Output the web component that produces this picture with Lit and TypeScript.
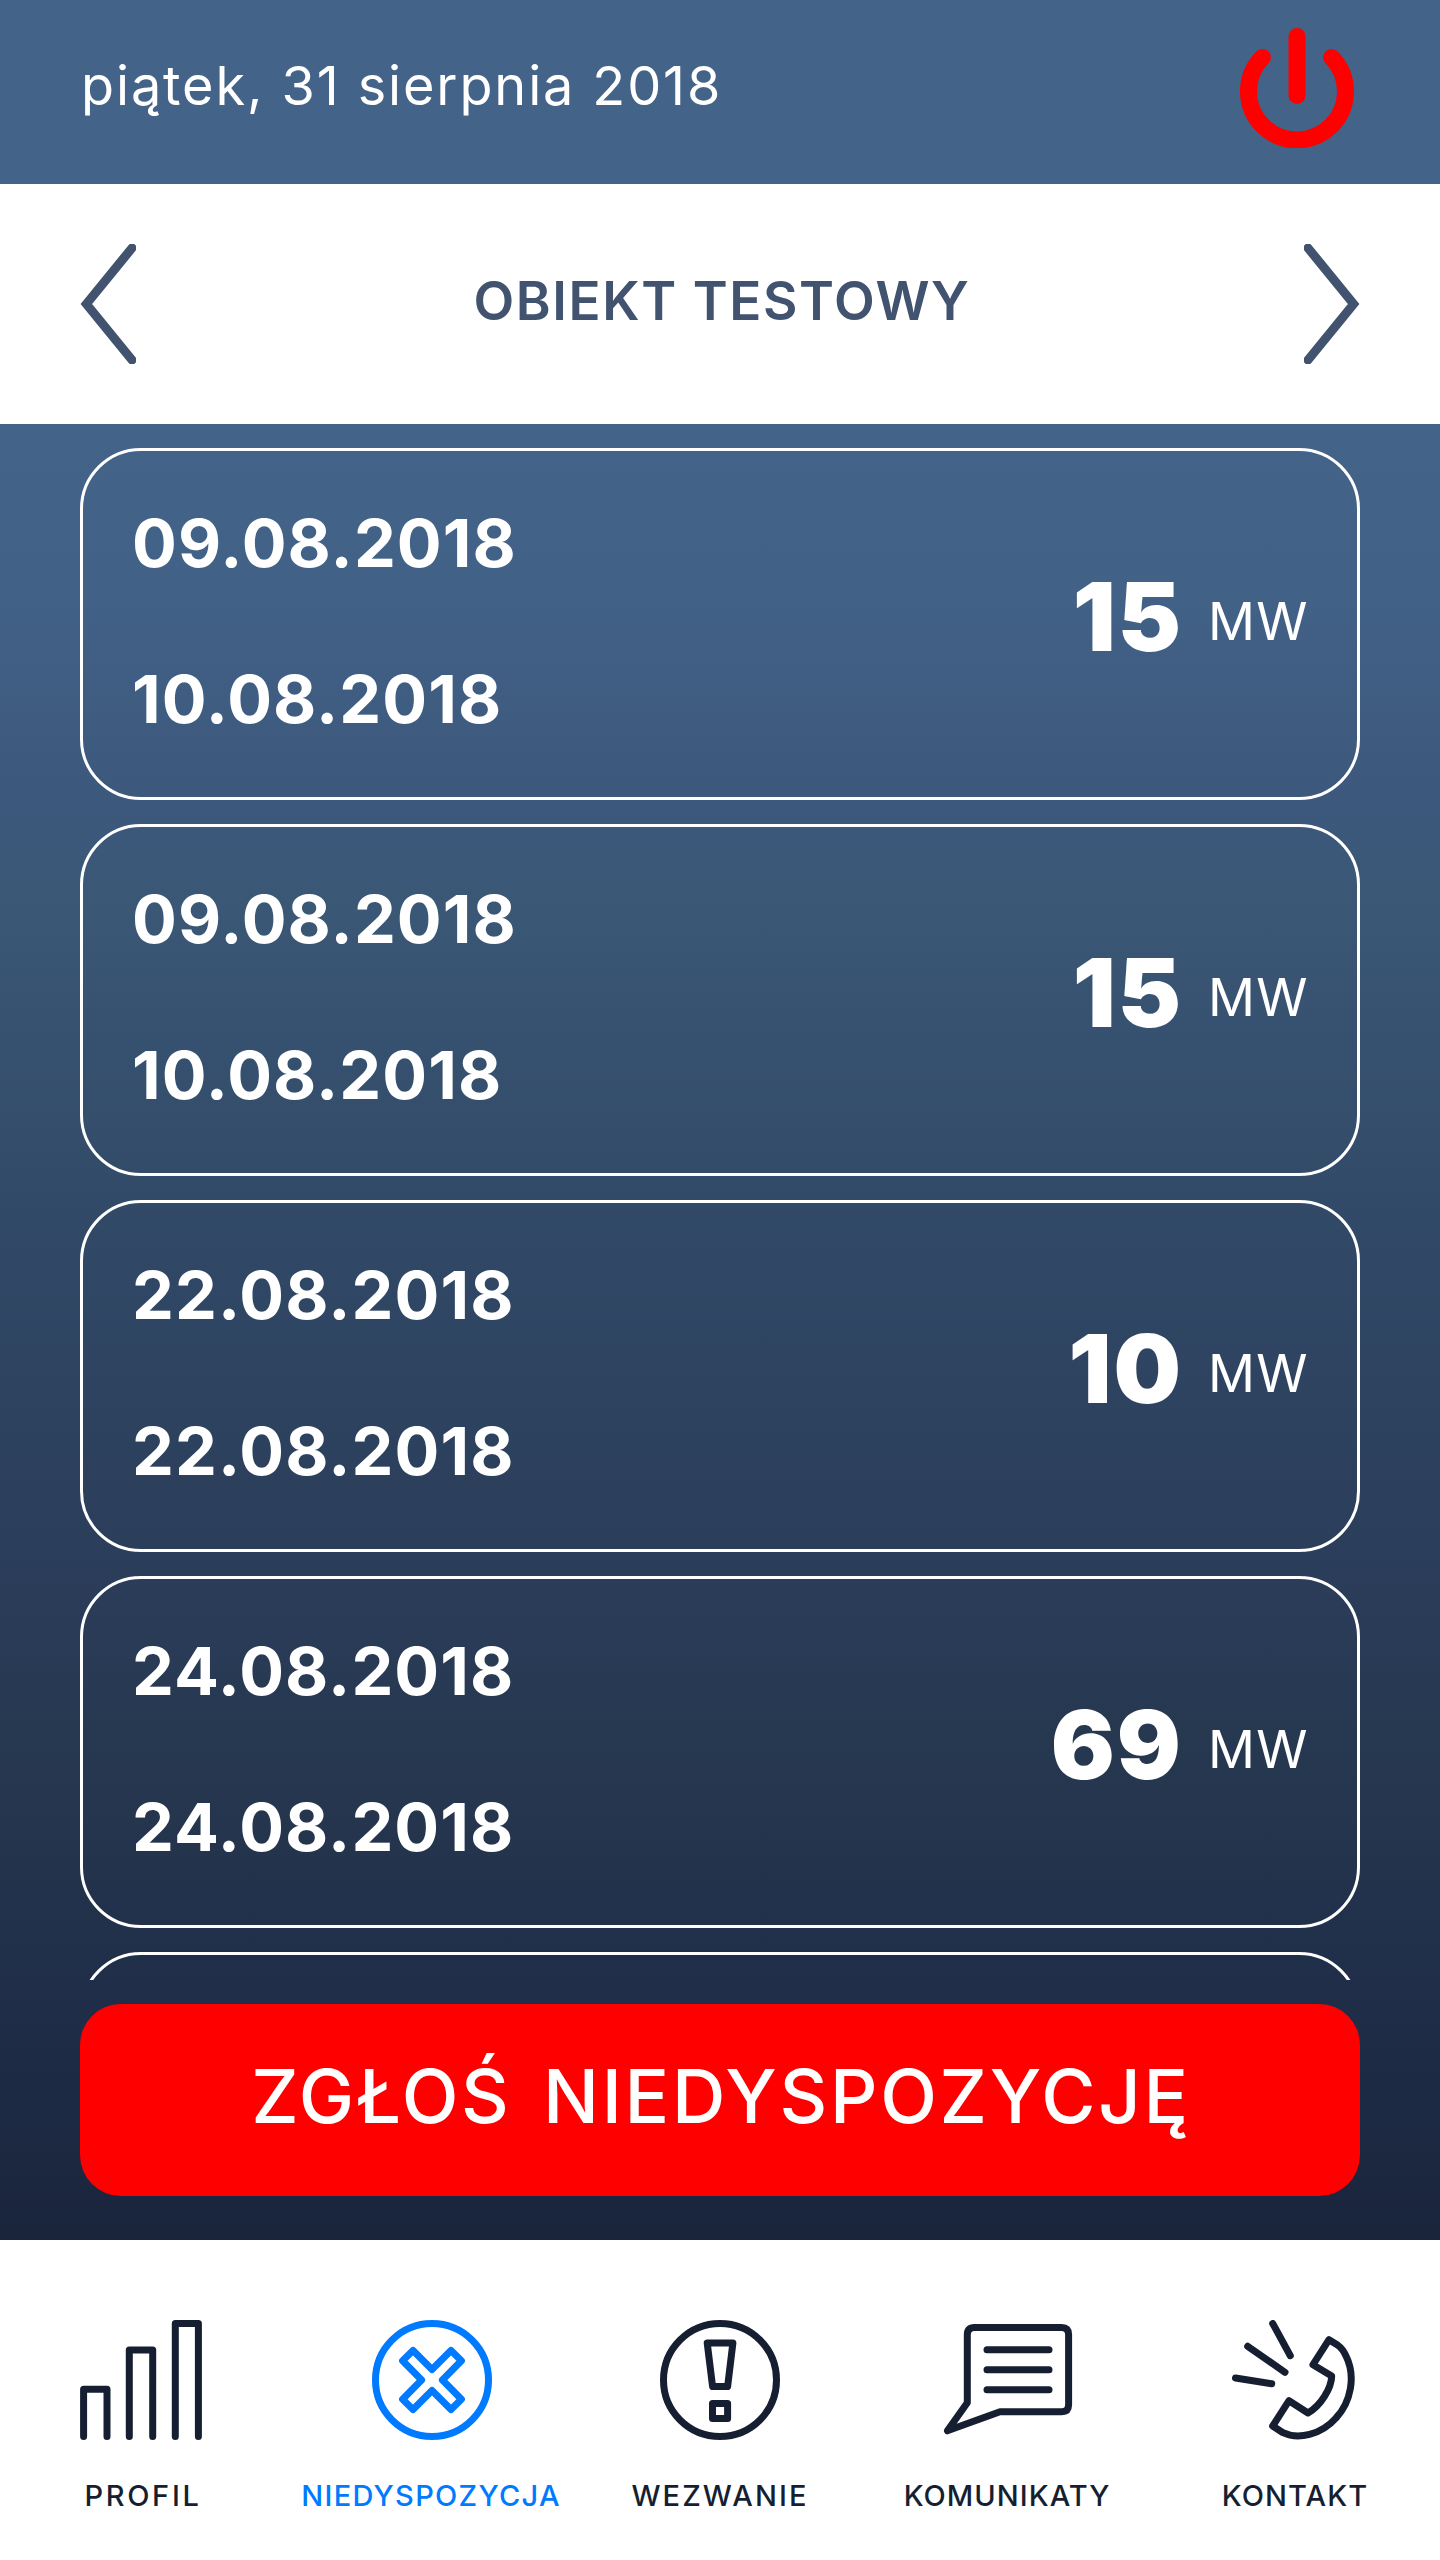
import { LitElement, html, svg, css, TemplateResult } from "lit";
import { customElement, property, state } from "lit/decorators.js";
import { classMap } from "lit/directives/class-map.js";

interface Outage {
  from: string;
  to: string;
  power: number;
}

interface Tab {
  id: string;
  label: string;
  tracking: number;
  icon: TemplateResult;
}

const OUTAGES: Outage[] = [
  { from: "09.08.2018", to: "10.08.2018", power: 15 },
  { from: "09.08.2018", to: "10.08.2018", power: 15 },
  { from: "22.08.2018", to: "22.08.2018", power: 10 },
  { from: "24.08.2018", to: "24.08.2018", power: 69 },
];

const TABS: Tab[] = [
  {
    id: "profile",
    label: "PROFIL",
    tracking: 2.68,
    icon: svg`<path d="M11.6 116.5V69.3H35V116.5M57.3 116.5V30H80.7V116.5M103.3 116.5V3.5H126.4V116.5" />`,
  },
  {
    id: "outage",
    label: "NIEDYSPOZYCJA",
    tracking: 1.31,
    icon: svg`<circle cx="72" cy="60" r="56.5" />
      <path d="M53 30.5 72 49.5 91 30.5 101.4 40.8 82.4 60 101.4 79.2 91 89.5 72 70.5 53 89.5 42.6 79.2 61.6 60 42.6 40.8Z" />`,
  },
  {
    id: "call",
    label: "WEZWANIE",
    tracking: 2.1,
    icon: svg`<circle cx="72" cy="60" r="56.5" />
      <path d="M59.2 23H84.9L79.6 66.6H64.6ZM64.5 83.4H79.6V98.4H64.5Z" />`,
  },
  {
    id: "messages",
    label: "KOMUNIKATY",
    tracking: 1.02,
    icon: svg`<path d="M31.3 82.7V14.4Q31.3 7.4 38.3 7.4H125.7Q132.6 7.4 132.6 14.4V84.7Q132.6 91.7 125.7 91.7H64L11.4 110.8Z" />
      <path d="M51 29.7H113M51 49.7H113M51 69.7H113" />`,
  },
  {
    id: "contact",
    label: "KONTAKT",
    tracking: 1.1,
    icon: svg`<path d="M48.7 3.5 66.3 35.7M23.7 26.3 61 52.3M11.5 58 47.7 63.7" />
      <path d="M105 19.7 89 44.7 107.7 55.9C107.5 68 97 85.5 84 93L65 80.7 48.7 106 59 112.7C74 120 97 115 112 98C127 82 132 56 122 36C120 31.5 117 27.5 113.5 25Z" />`,
  },
];

@customElement("outage-card")
class OutageCard extends LitElement {
  @property({ attribute: false }) item?: Outage;

  static styles = css`
    :host {
      display: flex;
      flex: none;
      box-sizing: border-box;
      height: 352px;
      padding: 0 47px 7px 49px;
      border: 3px solid #fff;
      border-radius: 61px;
      align-items: center;
      justify-content: space-between;
      color: #fff;
    }
    .date {
      font-size: 66.5px;
      font-weight: 700;
      line-height: 156px;
      letter-spacing: 1.1px;
    }
    .power {
      display: flex;
      align-items: center;
      gap: 22px;
    }
    .value {
      margin-bottom: 7px;
      font-size: 95px;
      font-weight: 900;
      line-height: 120px;
      letter-spacing: 2px;
      padding-right: 3px;
    }
    .unit {
      padding-top: 2px;
      font-size: 52px;
      font-weight: 400;
      line-height: 64px;
      letter-spacing: 1.4px;
      padding-right: 1px;
    }
  `;

  render() {
    if (!this.item) return html``;
    return html`
      <div>
        <div class="date">${this.item.from}</div>
        <div class="date">${this.item.to}</div>
      </div>
      <div class="power">
        <span class="value">${this.item.power}</span>
        <span class="unit">MW</span>
      </div>
    `;
  }
}

@customElement("app-root")
class AppRoot extends LitElement {
  @state() private active = "outage";

  static styles = css`
    :host {
      display: flex;
      flex-direction: column;
      width: 1440px;
      height: 2560px;
      overflow: hidden;
      background: #446388;
      font-family: Inter, "Liberation Sans", sans-serif;
    }
    svg {
      display: block;
      flex: none;
    }
    .header {
      display: flex;
      flex: none;
      box-sizing: border-box;
      height: 184px;
      padding: 28px 86px 36px 81px;
      align-items: center;
      justify-content: space-between;
      color: #fff;
    }
    .today {
      padding-bottom: 4px;
      font-size: 54px;
      line-height: 64px;
      letter-spacing: 1.88px;
    }
    .switcher {
      display: flex;
      flex: none;
      box-sizing: border-box;
      height: 240px;
      padding: 0 80px;
      align-items: center;
      justify-content: space-between;
      background: #fff;
      color: #41536f;
    }
    .name {
      padding: 0 0 6px 4px;
      font-size: 53px;
      font-weight: 600;
      line-height: 64px;
      letter-spacing: 1.6px;
    }
    .main {
      display: flex;
      flex: 1;
      min-height: 0;
      flex-direction: column;
      padding: 24px 80px 44px;
      background: linear-gradient(
        #446388 0,
        #426186 176px,
        #3c587c 380px,
        #3a5775 490px,
        #304866 826px,
        #2a3c58 1176px,
        #26384f 1336px,
        #202e49 1560px,
        #1a253c 1816px
      );
    }
    .list {
      display: flex;
      flex: 1;
      min-height: 0;
      flex-direction: column;
      gap: 24px;
      overflow: hidden;
    }
    .report {
      flex: none;
      height: 192px;
      margin-top: 24px;
      padding: 0 0 8px 2px;
      border: 0;
      border-radius: 41px;
      background: #f00;
      color: #fff;
      font: 500 74px / 90px Inter, "Liberation Sans", sans-serif;
      letter-spacing: 2.7px;
      word-spacing: 9px;
    }
    .tabs {
      display: grid;
      flex: none;
      box-sizing: border-box;
      height: 320px;
      padding-top: 80px;
      grid-template-columns: repeat(5, 288px);
      background: #fff;
    }
    .tab {
      display: flex;
      flex-direction: column;
      align-items: center;
      gap: 37px;
      color: #161f31;
      font-size: 29px;
      font-weight: 500;
      line-height: 37px;
    }
    .tab:not(:nth-child(3)) span {
      margin-right: 2px;
    }
    .tab.active {
      color: #007aff;
    }
  `;

  render() {
    return html`
      <header class="header">
        <span class="today">piątek, 31 sierpnia 2018</span>
        <svg width="114" height="120" fill="none" stroke="#f00" stroke-width="17" stroke-linecap="round">
          <path d="M22.4 29.4A48.5 48.5 0 1 0 91.6 29.4M57 8.5V67.5" />
        </svg>
      </header>
      <div class="switcher">
        <svg width="56" height="120" fill="none" stroke="currentColor" stroke-width="9" stroke-linecap="round">
          <path d="M52 4 6.4 60 52 116" />
        </svg>
        <span class="name">OBIEKT TESTOWY</span>
        <svg width="56" height="120" fill="none" stroke="currentColor" stroke-width="9" stroke-linecap="round">
          <path d="M4 4 49.6 60 4 116" />
        </svg>
      </div>
      <main class="main">
        <div class="list">
          ${OUTAGES.map((o) => html`<outage-card .item=${o}></outage-card>`)}
          <outage-card></outage-card>
        </div>
        <button class="report">ZGŁOŚ NIEDYSPOZYCJĘ</button>
      </main>
      <nav class="tabs">
        ${TABS.map(
          (t) => html`
            <div class=${classMap({ tab: true, active: t.id === this.active })} @click=${() => (this.active = t.id)}>
              <svg
                width="144"
                height="120"
                fill="none"
                stroke="currentColor"
                stroke-width="7"
                stroke-linecap="round"
                stroke-linejoin="round"
              >
                ${t.icon}
              </svg>
              <span style="letter-spacing:${t.tracking}px">${t.label}</span>
            </div>
          `
        )}
      </nav>
    `;
  }
}
